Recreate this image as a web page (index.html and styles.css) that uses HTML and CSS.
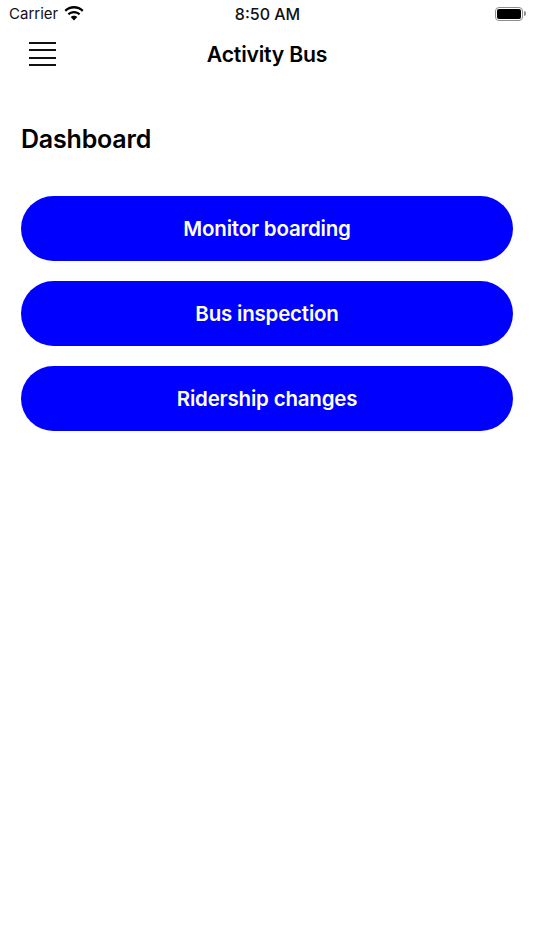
FILE: index.html
```html
<!DOCTYPE html>
<html lang="en">
<head>
<meta charset="utf-8">
<title>Activity Bus</title>
<link rel="stylesheet" href="styles.css">
</head>
<body>
<div class="status-bar">
  <div class="status-left">
    <span class="carrier">Carrier</span>
    <svg class="wifi" width="20" height="15" viewBox="0 0 20 15" aria-hidden="true">
      <path d="M10 2.6c3.1 0 5.9 1.2 8 3.2l1.500-1.700C16.900 1.500 13.600 0 10 0S3.100 1.500.500 4.100L2 5.800c2.100-2 4.900-3.200 8-3.200z"/>
      <path d="M10 7.300c1.800 0 3.500.7 4.800 1.900l1.500-1.700C14.600 5.900 12.400 4.900 10 4.900s-4.600 1-6.300 2.600l1.500 1.700C6.500 8 8.200 7.300 10 7.300z"/>
      <path d="M10 9.700c-1.300 0-2.400.5-3.300 1.300L10 14.600l3.300-3.600c-.9-.8-2-1.300-3.300-1.300z"/>
    </svg>
  </div>
  <span class="clock">8:50 AM</span>
  <div class="battery" aria-hidden="true">
    <span class="battery-shell"><span class="battery-level"></span></span>
    <span class="battery-cap"></span>
  </div>
</div>
<header class="nav">
  <button class="menu" aria-label="Menu"><i></i><i></i><i></i><i></i></button>
  <h1 class="nav-title">Activity Bus</h1>
</header>
<main class="content">
  <h2 class="heading">Dashboard</h2>
  <div class="actions">
    <button class="action">Monitor boarding</button>
    <button class="action">Bus inspection</button>
    <button class="action">Ridership changes</button>
  </div>
</main>
</body>
</html>
```
FILE: styles.css
```css
* { box-sizing: border-box; }
html, body { margin: 0; padding: 0; }
body {
  width: 534px;
  height: 950px;
  background: #fff;
  color: #000;
  font-family: Inter, "Liberation Sans", sans-serif;
  overflow: hidden;
}
.status-bar {
  height: 27px;
  display: grid;
  grid-template-columns: 1fr auto 1fr;
  align-items: center;
  padding: 0 8px 0 9px;
}
.status-left { display: flex; align-items: center; gap: 6px; }
.carrier { font-size: 15px; color: #111; }
.wifi { display: block; }
.clock { font-size: 16px; font-weight: 500; color: #111; }
.battery { display: flex; align-items: center; justify-content: flex-end; }
.battery-shell {
  width: 28px;
  height: 14px;
  border: 1.500px solid #8e8e8e;
  border-radius: 4px;
  padding: 1px;
  display: block;
}
.battery-level { display: block; height: 100%; background: #000; border-radius: 2px; }
.battery-cap { width: 2px; height: 5px; background: #8e8e8e; border-radius: 0 2px 2px 0; margin-left: 1px; }
.nav {
  height: 55px;
  position: relative;
  display: flex;
  align-items: center;
  justify-content: center;
}
.menu {
  position: absolute;
  left: 29px;
  top: 15px;
  width: 27px;
  height: 24px;
  padding: 0;
  border: 0;
  background: none;
  display: flex;
  flex-direction: column;
  justify-content: space-between;
}
.menu i { display: block; height: 2px; background: #111; }
.nav-title { margin: 0 0 1px; font-size: 21.200px; font-weight: 600; letter-spacing: -0.2px; }
.content { padding: 41px 21px 0; }
.heading { margin: 0 0 41px; font-size: 25px; line-height: 32px; font-weight: 600; letter-spacing: -0.2px; }
.actions { display: flex; flex-direction: column; gap: 20px; }
.action {
  height: 65px;
  padding: 0;
  border: 0;
  border-radius: 33px;
  background: #0000ff;
  color: #fff;
  font-family: inherit;
  font-size: 20.500px;
  font-weight: 600;
  letter-spacing: -0.2px;
}
```
